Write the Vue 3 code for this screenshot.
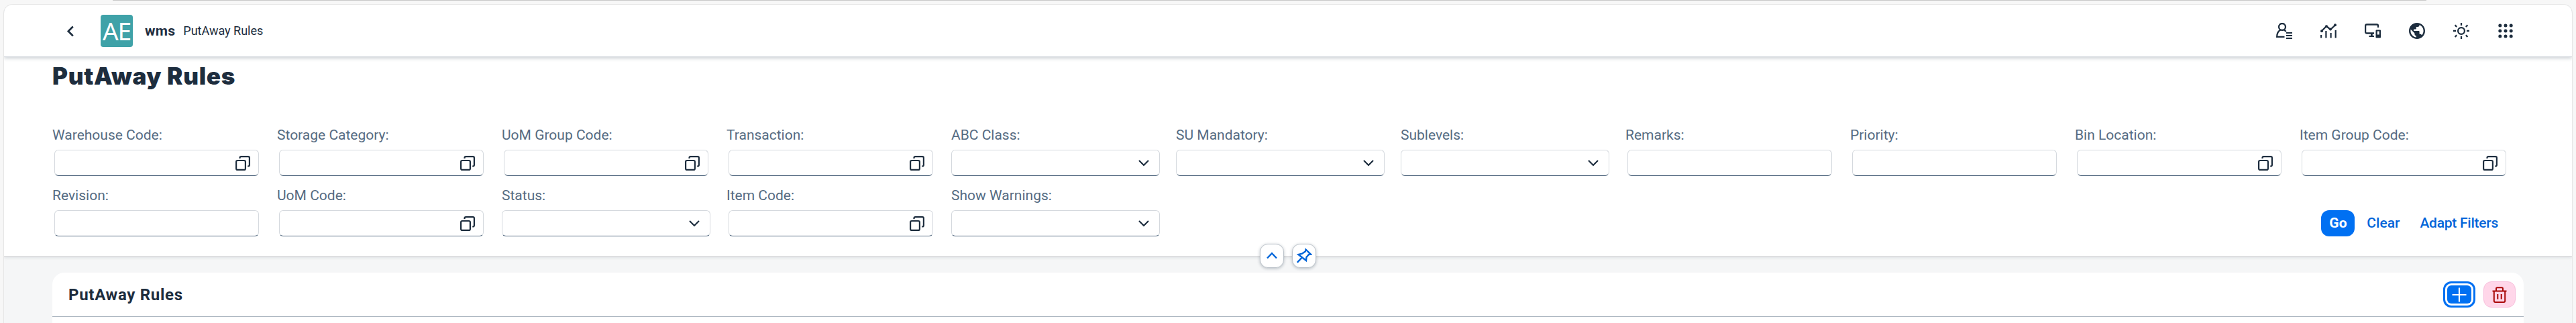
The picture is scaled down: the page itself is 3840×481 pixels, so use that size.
<script setup>
const filters = [
  { label: 'Warehouse Code:', type: 'help' },
  { label: 'Storage Category:', type: 'help' },
  { label: 'UoM Group Code:', type: 'help' },
  { label: 'Transaction:', type: 'help' },
  { label: 'ABC Class:', type: 'select' },
  { label: 'SU Mandatory:', type: 'select' },
  { label: 'Sublevels:', type: 'select' },
  { label: 'Remarks:', type: 'text' },
  { label: 'Priority:', type: 'text' },
  { label: 'Bin Location:', type: 'help' },
  { label: 'Item Group Code:', type: 'help' },
  { label: 'Revision:', type: 'text' },
  { label: 'UoM Code:', type: 'help' },
  { label: 'Status:', type: 'select' },
  { label: 'Item Code:', type: 'help' },
  { label: 'Show Warnings:', type: 'select' },
]
</script>

<template>
  <div class="stage">
    <div class="strip"></div>
    <div class="page">
      <header class="shell">
        <svg class="back" width="24" height="24" viewBox="0 0 24 24"><path d="M15.8 5.500 8.800 12.500l7 7" /></svg>
        <div class="logo">AE</div>
        <span class="brand">wms</span>
        <span class="crumb">PutAway Rules</span>
        <div class="tools">
          <svg viewBox="0 0 24 24">
            <g class="ln"><circle cx="9" cy="6" r="5" /><path d="M12.500 20.800H1.200C1.200 16 3 12.500 6.500 10.600M11.500 10.600c1.300.5 2.400 1.300 3.200 2.400" /></g>
            <path d="M15 14h9v2.100h-9zM15 18h9v2.100h-9zM15 22h9v2h-9z" />
          </svg>
          <svg viewBox="0 0 24 24">
            <path class="ln" d="M1.500 12.500 9 5l6 5 7.500-7" />
            <circle cx="2" cy="12.300" r="2" /><circle cx="9" cy="5.300" r="2" /><circle cx="15" cy="9.600" r="2" /><circle cx="22" cy="3.200" r="2" />
            <path d="M0 18h2.200v4.500H0zM7.300 12h2.200v10.500H7.300zM14.500 15h2.200v7.500h-2.200zM21.600 11h2.200v11.500h-2.200z" />
          </svg>
          <svg viewBox="0 0 24 24">
            <path class="ln" d="M20 7V4.500C20 3 19.500 2.500 18 2.500H3C1.500 2.500 1.100 3 1.100 4.500v9c0 1.500.4 2 1.900 2h11" />
            <path d="M9 15h2.800v4H14v2H6.500v-2H9z" />
            <path fill-rule="evenodd" d="M17.500 10.500h5.500q1 0 1 1v10q0 1-1 1h-5.500q-1 0-1-1v-10q0-1 1-1zM18.800 12.500v5h2.900v-5z" />
          </svg>
          <svg viewBox="2 2 20 20">
            <path d="M12 2C6.480 2 2 6.480 2 12s4.480 10 10 10 10-4.480 10-10S17.520 2 12 2zm-1 17.930c-3.950-.49-7-3.850-7-7.930 0-.62.080-1.210.210-1.790L9 15v1c0 1.100.9 2 2 2v1.930zm6.900-2.540c-.26-.81-1-1.390-1.900-1.390h-1v-3c0-.55-.45-1-1-1H8v-2h2c.55 0 1-.45 1-1V7h2c1.100 0 2-.9 2-2v-.41c2.930 1.190 5 4.060 5 7.410 0 2.080-.8 3.970-2.100 5.390z" />
          </svg>
          <svg viewBox="0 0 24 24">
            <g class="ln"><circle cx="12" cy="12" r="4.900" /><path d="M12 0v4M12 20v4M0 12h4M20 12h4M2.600 3.400 5.200 6M18.800 18.400l2.600 2.600M2.600 21l2.600-2.600M18.800 6l2.600-2.600" /></g>
          </svg>
          <svg viewBox="0 0 24 24">
            <g v-for="y in 3" :key="y"><circle v-for="x in 3" :key="x" :cx="x * 8.200 - 4.400" :cy="y * 8 - 4" r="2.500" /></g>
          </svg>
        </div>
      </header>

      <section class="head">
        <h1>PutAway Rules</h1>
        <div class="filters">
          <div v-for="f in filters" :key="f.label" class="field">
            <label>{{ f.label }}</label>
            <div class="box" :class="f.type">
              <svg v-if="f.type === 'help'" width="22" height="22" viewBox="0 0 22 22">
                <rect x="1.100" y="7" width="13.800" height="13.900" rx="2" /><path d="M6.500 4V3q0-1.900 2-1.900H19q1.900 0 1.900 1.900v10.500q0 2-1.900 2h-.8" />
              </svg>
              <svg v-else-if="f.type === 'select'" width="16" height="10" viewBox="0 0 16 10"><path d="M1 1 8 8l7-7" /></svg>
            </div>
          </div>
          <div class="actions">
            <button class="go">Go</button>
            <button class="clear">Clear</button>
            <button class="adapt">Adapt Filters</button>
          </div>
        </div>
        <div class="toggles">
          <div class="toggle"><svg viewBox="0 0 24 24"><path d="m5 15.500 7-7.300 7 7.300" /></svg></div>
          <div class="toggle"><svg viewBox="0 0 24 24"><path d="m14.500 2.500 7.500 7.300-3 .2-3.500 4-.5 5L3.500 10l5.500-1.300 4.800-3.200zM8.800 14.500l-7 7.300" /></svg></div>
        </div>
      </section>

      <main class="content">
        <section class="card">
          <div class="bar">
            <h2>PutAway Rules</h2>
            <button class="add"><span><svg viewBox="0 0 24 24"><path d="M12 1.500v21M1.500 12h21" /></svg></span></button>
            <button class="del">
              <svg viewBox="0 0 24 24"><path d="M1.500 6.500h21M3.800 6.500V21q0 2 2 2h12.400q2 0 2-2V6.500M7 6.500V3q0-1.700 1.500-1.700h7Q17 1.300 17 3v3.500M9.300 11v7.500M14.700 11v7.500" /></svg>
            </button>
          </div>
        </section>
      </main>
    </div>
  </div>
</template>

<style>
html, body { margin: 0; overflow: hidden; }
</style>

<style scoped>
* { box-sizing: border-box; }
.stage { width: 3840px; height: 481px; background: #f7f7f7; overflow: hidden; font-family: Roboto, "Liberation Sans", sans-serif; font-size: 21px; color: #1d2d3e; }
.strip { height: 1px; margin: 0 223px 6px 168px; background: #c8c8c8; }
.page { margin: 0 6px; height: 474px; background: #f5f6f7; border-radius: 13px 13px 0 0; box-shadow: 0 0 0 1px #e6e6e6; overflow: hidden; }
.shell { position: relative; z-index: 1; display: flex; align-items: center; height: 77px; padding: 0 87px; background: #fff; box-shadow: 0 1px 0 #d3d7dd, 0 3px 5px rgba(34, 53, 72, .22); }
.back { fill: none; stroke: #1d2d3e; stroke-width: 2.700; }
.logo { width: 48px; height: 48px; margin-left: 33px; border-radius: 4px; background: #3fa2a8; color: #fff; font: 37px/48px "Noto Sans", sans-serif; text-align: center; letter-spacing: -1px; }
.brand { margin-left: 18px; font-weight: 700; line-height: 24px; letter-spacing: .3px; }
.crumb { margin-left: 12px; font-size: 18px; line-height: 24px; }
.tools { display: flex; gap: 42px; margin-left: auto; }
.tools svg { width: 24px; height: 24px; fill: #1d2d3e; }
.tools .ln { fill: none; stroke: #1d2d3e; stroke-width: 2.300; }
.head { position: relative; height: 297px; padding: 8px 93px 0 72px; background: #fff; box-shadow: 0 1px 0 #d9d9d9, 0 3px 4px rgba(34, 53, 72, .1); }
h1 { margin: 0; height: 100px; font-family: Inter, Roboto, sans-serif; font-size: 35px; font-weight: 900; line-height: 42px; letter-spacing: .75px; white-space: nowrap; }
.filters { display: grid; grid-template-columns: repeat(11, 311px); column-gap: 24px; row-gap: 20px; }
.field label { display: block; height: 30px; line-height: 18px; color: #556b82; white-space: nowrap; }
.box { height: 39px; margin: 1px 3px 0; padding-right: 12px; display: flex; align-items: center; justify-content: flex-end; border: 1px solid #d5d9de; border-bottom: 1px solid #556b82; border-radius: 6px; }
.box.select { margin: 1px 0 0; padding-right: 15px; }
.box svg { fill: none; stroke: #1d2d3e; stroke-width: 2.200; }
.actions { grid-column: 6 / -1; display: flex; justify-content: flex-end; align-items: flex-end; }
button { height: 39px; padding: 0 12px; border: 0; border-radius: 12px; background: none; font: 500 21px/39px Roboto, sans-serif; color: #0064d9; white-space: nowrap; }
.go { width: 50px; background: #0070f2; color: #fff; font-weight: 700; }
.clear { margin: 0 6px; }
.adapt { padding-right: 15px; letter-spacing: -.25px; }
.toggles { position: absolute; left: 0; right: 0; bottom: -18px; display: flex; justify-content: center; gap: 12px; }
.toggle { width: 36px; height: 36px; display: grid; place-items: center; border: 1px solid #bcc3ca; border-radius: 12px; background: #fff; box-shadow: 0 1px 4px rgba(34, 53, 72, .3); }
.toggle svg { width: 24px; height: 24px; fill: none; stroke: #0064d9; stroke-width: 2.400; }
.content { padding: 25px 72px 0; }
.card { height: 90px; border-radius: 18px 18px 0 0; background: #fff; }
.bar { display: flex; align-items: center; height: 66px; padding: 0 12px 0 24px; border-bottom: 1px solid #a8b3bd; }
h2 { flex: 1; margin: 0; font-size: 24px; line-height: 30px; font-weight: 700; letter-spacing: .7px; }
.add, .del { width: 48px; padding: 0; display: grid; place-items: center; }
.add { border: 3px solid #0070f2; padding: 3px; }
.add span { width: 36px; height: 27px; display: grid; place-items: center; border-radius: 6px; background: #0070f2; }
.add svg { width: 24px; height: 24px; stroke: #fff; stroke-width: 2.200; }
.del { margin-left: 12px; border: 1px solid #f8bfdc; background: #ffd6e9; }
.del svg { width: 24px; height: 24px; fill: none; stroke: #aa0808; stroke-width: 2; }
</style>
